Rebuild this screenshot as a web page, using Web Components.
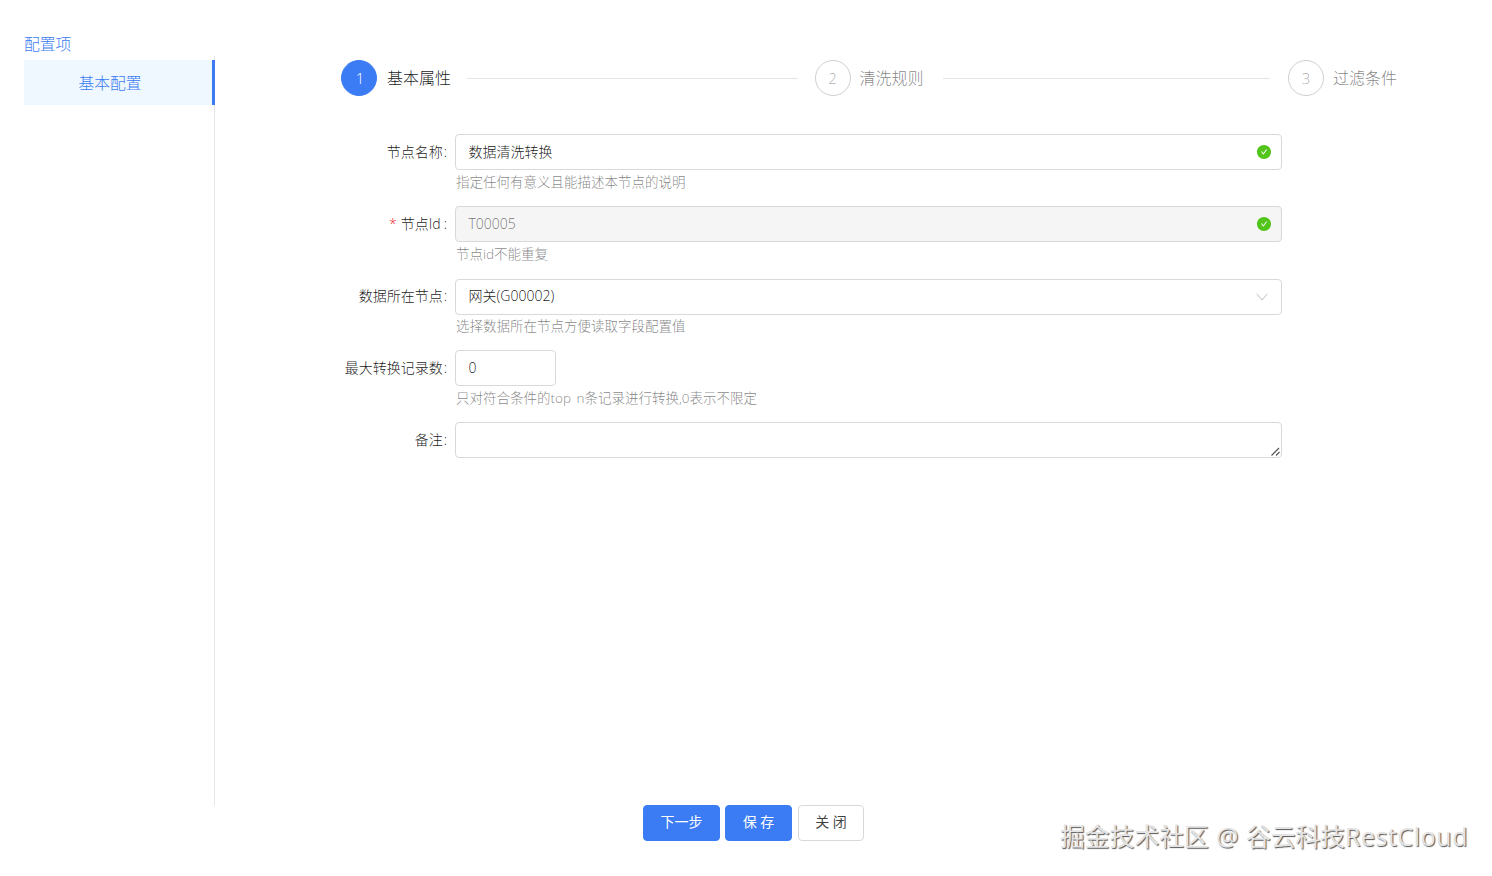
<!DOCTYPE html>
<html lang="zh">
<head>
<meta charset="utf-8">
<title>配置项</title>
<style>
  html, body { margin: 0; height: 100%; background: #fff; }
  body { font-family: "Open Sans", "Noto Sans CJK SC", sans-serif; font-size: 14px; font-weight: 300; color: rgba(0, 0, 0, .9); }
</style>
</head>
<body>
<config-page>
  <config-sidebar slot="side" heading="配置项">
    <nav-item active>基本配置</nav-item>
  </config-sidebar>

  <step-bar slot="main">
    <step-item num="1" active grow style="--line-left:16px">基本属性</step-item>
    <step-item num="2" grow style="--line-left:19px;--line-right:18px">清洗规则</step-item>
    <step-item num="3">过滤条件</step-item>
  </step-bar>

  <form-row slot="main" label="节点名称" hint="指定任何有意义且能描述本节点的说明">
    <text-box ok>数据清洗转换</text-box>
  </form-row>
  <form-row slot="main" label="节点Id" required hint="节点id不能重复">
    <text-box ok disabled>T00005</text-box>
  </form-row>
  <form-row slot="main" label="数据所在节点" hint="选择数据所在节点方便读取字段配置值">
    <text-box arrow style="margin:1px 0 -1px">网关(G00002)</text-box>
  </form-row>
  <form-row slot="main" label="最大转换记录数" hint="只对符合条件的top n条记录进行转换,0表示不限定">
    <text-box style="width:101px">0</text-box>
  </form-row>
  <form-row slot="main" label="备注">
    <note-box></note-box>
  </form-row>

  <action-button slot="foot" primary style="width:77px">下一步</action-button>
  <action-button slot="foot" primary style="width:67px;margin-left:5px">保 存</action-button>
  <action-button slot="foot" style="width:66px;margin-left:6px">关 闭</action-button>

  <span slot="mark">掘金技术社区 @ 谷云科技<span style="letter-spacing:.65px">RestCloud</span></span>
</config-page>

<script>
const BLUE = '#3b7cf4';

class ConfigPage extends HTMLElement {
  constructor() {
    super();
    this.attachShadow({mode: 'open'}).innerHTML = `
      <style>
        :host { display: flex; flex-direction: column; height: 876px; position: relative; overflow: hidden; }
        .top { display: flex; height: 806px; flex: none; }
        .main { flex: 1; padding: 60px 0 0 115px; min-width: 0; }
        .foot { display: flex; padding: 0 0 0 643px; margin-top: -1px; }
        .mark { position: absolute; left: 1060px; top: 819px; font-size: 24.8px; font-weight: 400; line-height: 34px; white-space: nowrap;
                word-spacing: 1px; color: #e4e4e4; text-shadow: 1px 1px 1px #555; }
      </style>
      <div class="top">
        <slot name="side"></slot>
        <div class="main"><slot name="main"></slot></div>
      </div>
      <div class="foot"><slot name="foot"></slot></div>
      <div class="mark"><slot name="mark"></slot></div>
    `;
  }
}

class ConfigSidebar extends HTMLElement {
  constructor() {
    super();
    this.attachShadow({mode: 'open'}).innerHTML = `
      <style>
        :host { display: flex; flex-direction: column; width: 191px; margin-left: 24px; padding-top: 32px; }
        .title { height: 24px; font-size: 15.8px; line-height: 24px; color: ${BLUE}; }
        .list { flex: 1; padding-top: 4px; border-right: 1px solid #e6e6e6; }
      </style>
      <div class="title">${this.getAttribute('heading')}</div>
      <div class="list"><slot></slot></div>
    `;
  }
}

class NavItem extends HTMLElement {
  constructor() {
    super();
    this.attachShadow({mode: 'open'}).innerHTML = `
      <style>
        :host { display: block; height: 45px; margin-right: -1px; padding-right: 16px; box-sizing: border-box; text-align: center;
                font-size: 15.8px; line-height: 47px; color: ${BLUE}; }
        :host([active]) { background: #eff7ff; border-right: 3px solid ${BLUE}; }
      </style>
      <slot></slot>
    `;
  }
}

class StepBar extends HTMLElement {
  constructor() {
    super();
    this.attachShadow({mode: 'open'}).innerHTML = `
      <style>
        :host { display: flex; width: 1056px; margin: 0 0 38px 11px; }
      </style>
      <slot></slot>
    `;
  }
}

class StepItem extends HTMLElement {
  constructor() {
    super();
    this.attachShadow({mode: 'open'}).innerHTML = `
      <style>
        :host { display: flex; align-items: center; height: 36px; color: rgba(0, 0, 0, .5); font-size: 16px; }
        :host([grow]) { flex: 1; }
        :host([active]) { color: rgba(0, 0, 0, .9); }
        .dot { width: 36px; height: 36px; box-sizing: border-box; border: 1px solid #cfcfcf; border-radius: 50%; flex: none;
               display: flex; align-items: center; justify-content: center; font-size: 15px; color: rgba(0, 0, 0, .35); margin-right: 9px; }
        :host([active]) .dot { background: ${BLUE}; border-color: ${BLUE}; color: #fff; margin-right: 10px; padding-left: 2px; }
        .title { padding-bottom: 2px; white-space: nowrap; }
        .line { flex: 1; height: 1px; background: #e4e4e4; margin: 0 var(--line-right, 17px) 0 var(--line-left, 17px); display: none; }
        :host([grow]) .line { display: block; }
      </style>
      <span class="dot">${this.getAttribute('num')}</span>
      <span class="title"><slot></slot></span>
      <span class="line"></span>
    `;
  }
}

class FormRow extends HTMLElement {
  constructor() {
    super();
    const hint = this.getAttribute('hint');
    const required = this.hasAttribute('required');
    this.attachShadow({mode: 'open'}).innerHTML = `
      <style>
        :host { display: grid; grid-template-columns: 118px 827px; column-gap: 7px; height: 72px; }
        label { display: flex; justify-content: flex-end; align-items: center; height: 34px; white-space: nowrap; font-size: 14px; }
        .req { color: #f5222d; margin-right: 4px; font-size: 14px; }
        .colon { margin: 0 1px 0 1px; }
        :host([required]) .colon { margin-left: 3px; }
        .hint { font-size: 13.5px; line-height: 24px; padding-left: 1px; word-spacing: 2px; color: rgba(0, 0, 0, .5); white-space: nowrap; }
      </style>
      <label>${required ? '<span class="req">*</span>' : ''}${this.getAttribute('label')}<span class="colon">:</span></label>
      <div>
        <slot></slot>
        ${hint ? `<div class="hint">${hint}</div>` : ''}
      </div>
    `;
  }
}

class TextBox extends HTMLElement {
  constructor() {
    super();
    const ok = this.hasAttribute('ok');
    const arrow = this.hasAttribute('arrow');
    this.attachShadow({mode: 'open'}).innerHTML = `
      <style>
        :host { display: flex; align-items: center; justify-content: space-between; height: 36px; box-sizing: border-box;
                padding: 0 10px 0 12.5px; border: 1px solid #d9d9d9; border-radius: 4px; background: #fff; font-size: 14px; }
        :host([disabled]) { background: #f5f5f5; color: rgba(0, 0, 0, .55); }
        :host([arrow]) { padding-right: 13px; }
        .text { padding-bottom: 2px; }
        :host([arrow]) .text { padding-bottom: 4px; }
        svg { display: block; }
      </style>
      <span class="text"><slot></slot></span>
      ${ok ? `<svg width="14" height="14" viewBox="64 64 896 896" fill="#52c41a"><path d="M512 64C264.6 64 64 264.6 64 512s200.6 448 448 448 448-200.6 448-448S759.4 64 512 64zm193.5 301.7l-210.6 292a31.8 31.8 0 0 1-51.7 0L318.5 484.9c-3.8-5.3 0-12.7 6.5-12.7h46.9c10.2 0 19.9 4.9 25.9 13.3l71.2 98.8 157.2-218c6-8.3 15.6-13.3 25.9-13.3H699c6.5 0 10.3 7.4 6.5 12.7z"/></svg>` : ''}
      ${arrow ? `<svg width="12" height="8" viewBox="0 0 12 8" fill="none" stroke="#bfbfbf" stroke-width="1"><path d="M.7.8 6 7 11.3.8"/></svg>` : ''}
    `;
  }
}

class NoteBox extends HTMLElement {
  constructor() {
    super();
    this.attachShadow({mode: 'open'}).innerHTML = `
      <style>
        :host { display: block; height: 36px; position: relative; }
        textarea { display: block; width: 100%; height: 36px; box-sizing: border-box; margin: 0; padding: 4px 12px; resize: none;
                   border: 1px solid #d9d9d9; border-radius: 4px; background: #fff; outline: none; font: inherit; }
        svg { position: absolute; right: 1px; bottom: 1px; }
      </style>
      <textarea></textarea>
      <svg width="11" height="11" viewBox="0 0 11 11" fill="none" stroke="#555" stroke-width="1.2"><path d="M1.5 9.5 9 2M6 9.5 9.5 6"/></svg>
    `;
  }
}

class ActionButton extends HTMLElement {
  constructor() {
    super();
    this.attachShadow({mode: 'open'}).innerHTML = `
      <style>
        :host { display: block; height: 36px; box-sizing: border-box; text-align: center; line-height: 32px;
                border: 1px solid #d9d9d9; border-radius: 4px; background: #fff; font-size: 14px; font-weight: 400; color: rgba(0, 0, 0, .75); }
        :host([primary]) { background: ${BLUE}; border-color: ${BLUE}; color: #fff; }
      </style>
      <slot></slot>
    `;
  }
}

customElements.define('config-page', ConfigPage);
customElements.define('config-sidebar', ConfigSidebar);
customElements.define('nav-item', NavItem);
customElements.define('step-bar', StepBar);
customElements.define('step-item', StepItem);
customElements.define('form-row', FormRow);
customElements.define('text-box', TextBox);
customElements.define('note-box', NoteBox);
customElements.define('action-button', ActionButton);
</script>
</body>
</html>
